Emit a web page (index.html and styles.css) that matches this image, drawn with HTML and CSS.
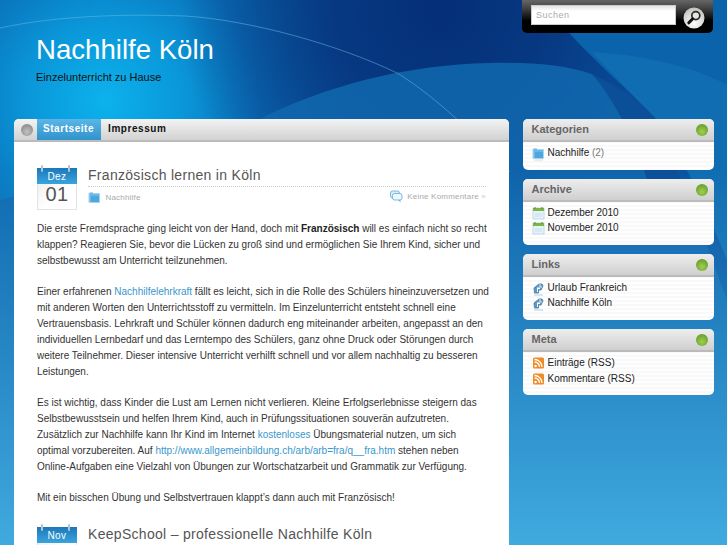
FILE: index.html
```html
<!DOCTYPE html>
<html lang="de">
<head>
<meta charset="utf-8">
<title>Nachhilfe Köln</title>
<link rel="stylesheet" href="styles.css">
</head>
<body>
<svg class="bg" width="727" height="545" viewBox="0 0 727 545" aria-hidden="true">
  <defs>
    <radialGradient id="glow" gradientUnits="userSpaceOnUse" cx="105" cy="100" r="250">
      <stop offset="0" stop-color="#0cb2ec"/>
      <stop offset=".3" stop-color="#0a98da"/>
      <stop offset=".62" stop-color="#0a6fb8"/>
      <stop offset="1" stop-color="#0a55a2"/>
    </radialGradient>
    <radialGradient id="navy" gradientUnits="userSpaceOnUse" cx="440" cy="10" r="260">
      <stop offset="0" stop-color="#052e78"/>
      <stop offset=".4" stop-color="#06377f" stop-opacity=".95"/>
      <stop offset=".75" stop-color="#06377f" stop-opacity=".4"/>
      <stop offset="1" stop-color="#06377f" stop-opacity="0"/>
    </radialGradient>
    <linearGradient id="fade" gradientUnits="userSpaceOnUse" x1="0" y1="170" x2="0" y2="545">
      <stop offset="0" stop-color="#40aade" stop-opacity="0"/>
      <stop offset="1" stop-color="#40aade"/>
    </linearGradient>
  </defs>
  <rect width="727" height="545" fill="#0a55a2"/>
  <rect width="727" height="545" fill="url(#glow)"/>
  <rect width="727" height="545" fill="url(#navy)"/>
  <path d="M215 145C290 95 390 65 490 63 530 62 565 65 592 74L655 118 690 200 727 300V545H0V200Z" fill="#1168ae" fill-opacity=".85"/>
  <path d="M540 0C590 60 625 85 655 118 680 150 705 205 727 250V0Z" fill="#0b64ab"/>
  <path d="M592 52C640 55 690 65 727 85V260C705 205 680 150 655 118 635 97 612 74 592 52Z" fill="#116db1"/>
  <path d="M592 74C615 85 640 100 655 118L690 200 650 190C640 150 615 100 592 74Z" fill="#0a4f98"/>
  <path d="M0 28C60 15 130 14 185 16 250 20 340 45 399 74 440 100 480 140 510 172" fill="none" stroke="#6bbce8" stroke-opacity=".5"/>
  <rect width="727" height="545" fill="url(#fade)"/>
</svg>
<div class="page">
  <header class="top">
    <div class="brand">
      <h1 class="site-title">Nachhilfe Köln</h1>
      <p class="tagline">Einzelunterricht zu Hause</p>
    </div>
    <form class="search">
      <div class="search-field">Suchen</div>
      <span class="search-btn">
        <svg width="22" height="22" viewBox="0 0 22 22"><defs><radialGradient id="sb" cx=".5" cy=".75" r=".8"><stop offset="0" stop-color="#fff"/><stop offset="1" stop-color="#bdbdb8"/></radialGradient></defs><circle cx="11" cy="11" r="10.5" fill="url(#sb)"/><circle cx="12.8" cy="8.6" r="4" fill="#e4e4e2" stroke="#2a2a2a" stroke-width="1.7"/><path d="M9.7 11.8 5.8 15.8" stroke="#111" stroke-width="3" stroke-linecap="round"/></svg>
      </span>
    </form>
  </header>
  <div class="columns">
    <main class="content">
      <nav class="nav">
        <span class="nav-dot"></span>
        <a class="nav-item active">Startseite</a>
        <a class="nav-item">Impressum</a>
      </nav>
      <div class="posts">
        <article class="post">
          <div class="post-head">
            <div class="cal">
              <div class="cal-month">Dez</div>
              <div class="cal-day">01</div>
            </div>
            <div class="post-titles">
              <h2 class="post-title">Französisch lernen in Köln</h2>
              <div class="post-meta">
                <span class="meta-cat">
                  <svg class="ic" width="13" height="14" viewBox="0 0 13 14"><path d="M1 3.500C1 2.500 5 2 5.500 3.500H11.500V12.500H1Z" fill="#69b8ea" stroke="#a9d3ee"/><path d="M3 6h8v6H3Z" fill="#4ea6de"/></svg>
                  Nachhilfe
                </span>
                <span class="meta-com">
                  <svg class="ic" width="13" height="13" viewBox="0 0 13 13"><rect x=".5" y="1" width="9" height="7" rx="2" fill="#d9eef9" stroke="#79bbe0"/><rect x="2.500" y="3.500" width="9.500" height="6.500" rx="2" fill="#eef8fd" stroke="#79bbe0"/><path d="M8 10l2.500 2.500V10" fill="#79bbe0"/></svg>
                  Keine Kommentare <span class="raquo">»</span>
                </span>
              </div>
            </div>
          </div>
          <p>Die erste Fremdsprache ging leicht von der Hand, doch mit <strong>Französisch</strong> will es einfach nicht so recht klappen? Reagieren Sie, bevor die Lücken zu groß sind und ermöglichen Sie Ihrem Kind, sicher und selbstbewusst am Unterricht teilzunehmen.</p>
          <p>Einer erfahrenen <a>Nachhilfelehrkraft</a> fällt es leicht, sich in die Rolle des Schülers hineinzuversetzen und mit anderen Worten den Unterrichtsstoff zu vermitteln. Im Einzelunterricht entsteht schnell eine Vertrauensbasis. Lehrkraft und Schüler können dadurch eng miteinander arbeiten, angepasst an den individuellen Lernbedarf und das Lerntempo des Schülers, ganz ohne Druck oder Störungen durch weitere Teilnehmer. Dieser intensive Unterricht verhilft schnell und vor allem nachhaltig zu besseren Leistungen.</p>
          <p>Es ist wichtig, dass Kinder die Lust am Lernen nicht verlieren. Kleine Erfolgserlebnisse steigern das Selbstbewusstsein und helfen Ihrem Kind, auch in Prüfungssituationen souverän aufzutreten. Zusätzlich zur Nachhilfe kann Ihr Kind im Internet <a>kostenloses</a> Übungsmaterial nutzen, um sich<br>optimal vorzubereiten. Auf <a>http://www.allgemeinbildung.ch/arb/arb=fra/q__fra.htm</a> stehen neben<br>Online-Aufgaben eine Vielzahl von Übungen zur Wortschatzarbeit und Grammatik zur Verfügung.</p>
          <p>Mit ein bisschen Übung und Selbstvertrauen klappt’s dann auch mit Französisch!</p>
        </article>
        <article class="post">
          <div class="post-head">
            <div class="cal">
              <div class="cal-month">Nov</div>
            </div>
            <div class="post-titles">
              <h2 class="post-title">KeepSchool – professionelle Nachhilfe Köln</h2>
            </div>
          </div>
        </article>
      </div>
    </main>
    <aside class="sidebar">
      <section class="widget">
        <h3 class="widget-head">Kategorien<span class="orb"></span></h3>
        <ul class="widget-list">
          <li><svg class="li-ic" width="13" height="15" viewBox="0 0 13 15"><path d="M1 3.500C1 2.500 5 2 5.500 3.500H11.500V12.500H1Z" fill="#69b8ea" stroke="#a9d3ee"/><path d="M3 6h8v6H3Z" fill="#4ea6de"/><path d="M2 14h9" stroke="#d8d8d8"/></svg>Nachhilfe <span class="count">(2)</span></li>
        </ul>
      </section>
      <section class="widget">
        <h3 class="widget-head">Archive<span class="orb"></span></h3>
        <ul class="widget-list">
          <li><svg class="li-ic" width="13" height="14" viewBox="0 0 13 14"><rect x="1" y="2" width="11" height="11" fill="#e6f2fa" stroke="#bcd9ea"/><rect x="1" y="2" width="11" height="3" fill="#7fb545"/><path d="M3 1v2M10 1v2" stroke="#5d8f2f"/><path d="M3 8h7M3 10h7" stroke="#c5ddec"/></svg>Dezember 2010</li>
          <li><svg class="li-ic" width="13" height="14" viewBox="0 0 13 14"><rect x="1" y="2" width="11" height="11" fill="#e6f2fa" stroke="#bcd9ea"/><rect x="1" y="2" width="11" height="3" fill="#7fb545"/><path d="M3 1v2M10 1v2" stroke="#5d8f2f"/><path d="M3 8h7M3 10h7" stroke="#c5ddec"/></svg>November 2010</li>
        </ul>
      </section>
      <section class="widget">
        <h3 class="widget-head">Links<span class="orb"></span></h3>
        <ul class="widget-list">
          <li><svg class="li-ic" width="13" height="15" viewBox="0 0 13 15"><path d="M2 7l5-4h3l1 2-2 4H6.500V12H2.500Z" fill="#5f97c2" stroke="#3f78a6" stroke-width=".8"/><path d="M5 6.500h3V8H6v3H5Z" fill="#fff"/><path d="M8 3v3h2" fill="none" stroke="#fff" stroke-width=".8"/><path d="M2 14h9" stroke="#a9cfe6"/></svg>Urlaub Frankreich</li>
          <li><svg class="li-ic" width="13" height="15" viewBox="0 0 13 15"><path d="M2 7l5-4h3l1 2-2 4H6.500V12H2.500Z" fill="#5f97c2" stroke="#3f78a6" stroke-width=".8"/><path d="M5 6.500h3V8H6v3H5Z" fill="#fff"/><path d="M8 3v3h2" fill="none" stroke="#fff" stroke-width=".8"/><path d="M2 14h9" stroke="#a9cfe6"/></svg>Nachhilfe Köln</li>
        </ul>
      </section>
      <section class="widget">
        <h3 class="widget-head">Meta<span class="orb"></span></h3>
        <ul class="widget-list">
          <li><svg class="li-ic" width="13" height="14" viewBox="0 0 13 14"><rect x="1" y="1.500" width="11" height="11" rx="1.500" fill="#f08a24"/><circle cx="3.600" cy="10" r="1.200" fill="#fff"/><path d="M2.500 6a5 5 0 0 1 5 5M2.500 3.500a7.500 7.500 0 0 1 7.500 7.500" fill="none" stroke="#fff" stroke-width="1.300"/></svg>Einträge (RSS)</li>
          <li><svg class="li-ic" width="13" height="14" viewBox="0 0 13 14"><rect x="1" y="1.500" width="11" height="11" rx="1.500" fill="#f08a24"/><circle cx="3.600" cy="10" r="1.200" fill="#fff"/><path d="M2.500 6a5 5 0 0 1 5 5M2.500 3.500a7.500 7.500 0 0 1 7.500 7.500" fill="none" stroke="#fff" stroke-width="1.300"/></svg>Kommentare (RSS)</li>
        </ul>
      </section>
    </aside>
  </div>
</div>
</body>
</html>
```
FILE: styles.css
```css
html, body { margin: 0; padding: 0; height: 545px; overflow: hidden; }
body { font-family: "Liberation Sans", Arial, sans-serif; font-size: 10px; color: #222; background: #0b7cc0; position: relative; }
.bg { position: absolute; left: 0; top: 0; }
.page { position: relative; width: 727px; height: 545px; overflow: hidden; }
.top { display: flex; justify-content: space-between; height: 119px; padding-left: 36px; padding-right: 14px; }
.site-title { margin: 36px 0 0; font-size: 27.6px; font-weight: 400; color: #fff; line-height: 28px; }
.tagline { margin: 6px 0 0; font-size: 11px; color: #111; line-height: 14px; }
.search { width: 191px; height: 33px; background: linear-gradient(#666 0, #444 8px, #000 21px); border-radius: 0 0 5px 5px; display: flex; gap: 7px; padding: 5px 8px 0 9px; box-sizing: border-box; }
.search-field { width: 145px; height: 20px; background: linear-gradient(#e4e4e4, #fff 5px); box-sizing: border-box; border: 1px solid #ccc; font-size: 9px; letter-spacing: .5px; color: #aaa; padding: 3px 4px; line-height: 12px; }
.search-btn { width: 22px; height: 22px; margin-top: 2px; display: block; }
.columns { display: flex; padding-left: 14px; gap: 13.500px; align-items: flex-start; }
.content { width: 495px; height: 426px; background: #fff; border-radius: 5px 5px 0 0; overflow: hidden; flex: none; }
.nav { display: flex; height: 21px; background: linear-gradient(#f3f3f3, #d2d2d2); border-bottom: 2px solid #bbb; font-size: 10px; font-weight: 700; line-height: 20px; letter-spacing: .55px; }
.nav-dot { width: 12px; height: 12px; border-radius: 50%; background: radial-gradient(circle at 50% 65%, #c2c2c2, #7c7c7c); margin: 5px 4px 0 7px; }
.nav-item { padding: 0 7px; color: #111; }
.nav-item.active { background: linear-gradient(#5cb6e4, #2f93cc); color: #fff; padding: 0 7px 0 6px; }
.posts { padding: 26px 23px 0; }
.post { margin-bottom: 21px; }
.post-head { display: flex; gap: 11px; margin-bottom: 11px; }
.cal { width: 40px; height: 42px; flex: none; border: 1px solid #e4e4e4; border-top: none; box-sizing: border-box; background: linear-gradient(135deg, #e9e9e9, #fff 60%); position: relative; }
.cal::before, .cal::after { content: ""; position: absolute; top: -3px; width: 2px; height: 7px; background: #b8c4cc; border-radius: 1px; }
.cal::before { left: 3px; }
.cal::after { right: 6px; }
.cal-month { height: 16px; margin: 0 -1px; background: linear-gradient(#1b78ba, #3aa4dc); color: #fff; font-size: 10px; text-align: center; line-height: 18px; letter-spacing: .4px; }
.cal-day { font-size: 20px; color: #555; text-align: center; line-height: 21px; letter-spacing: .5px; }
.post-titles { flex: 1; margin-top: -1px; }
.post-title { margin: 0; font-size: 14px; font-weight: 400; color: #555; line-height: 16px; letter-spacing: .3px; padding-bottom: 3px; border-bottom: 1px dotted #ccc; }
.post-meta { display: flex; justify-content: space-between; font-size: 8px; color: #aaa; padding-top: 3px; line-height: 13px; letter-spacing: .2px; }
.raquo { color: #ccc; }
.ic { vertical-align: -4px; margin-right: 2px; }
.post p { margin: 0 -6px 15px 0; font-size: 10px; line-height: 16px; color: #333; }
.post p a { color: #3a97cc; }
.post p strong { color: #222; }
.sidebar { width: 191px; flex: none; display: flex; flex-direction: column; gap: 9px; }
.widget { background: repeating-linear-gradient(#fff 0, #fff 2px, #f9f9f9 2px, #f9f9f9 4px); border-radius: 5px; overflow: hidden; }
.widget-head { margin: 0; height: 21px; padding: 0 9px; background: linear-gradient(#eee, #cfcfcf); border-bottom: 2px solid #bbb; font-size: 11px; font-weight: 700; color: #666; line-height: 21px; position: relative; }
.orb { position: absolute; right: 6px; top: 5px; width: 12px; height: 12px; border-radius: 50%; background: radial-gradient(circle at 50% 65%, #9fd050, #5a8f22); }
.widget-list { list-style: none; margin: 0; padding: 3px 10px 9px 9px; font-size: 10px; line-height: 15.600px; color: #222; }
.widget-list li { display: flex; align-items: flex-start; white-space: pre; height: 15.600px; }
.li-ic { margin-right: 3px; margin-top: 1px; flex: none; }
.count { color: #777; }
```
